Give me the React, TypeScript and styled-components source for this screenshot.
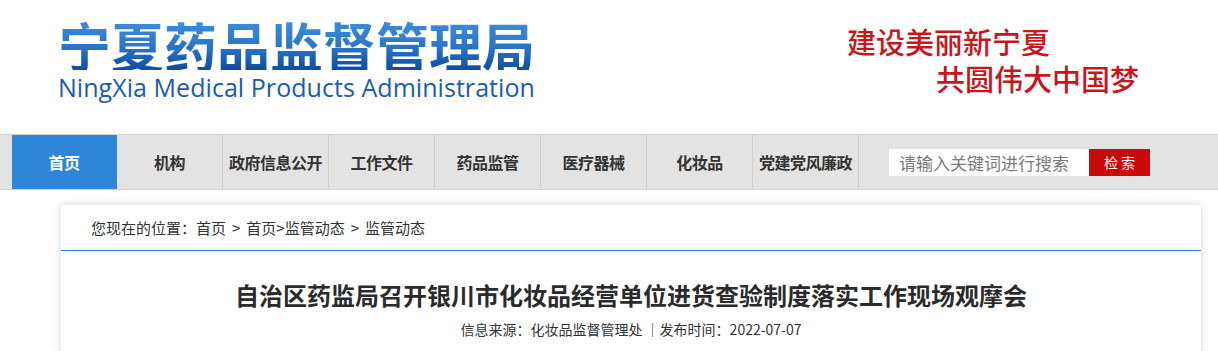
import React from "react";
import styled, { createGlobalStyle } from "styled-components";

const GlobalStyle = createGlobalStyle`
  body {
    margin: 0;
    background: #fff;
    font-family: "Noto Sans CJK SC", "Noto Sans", sans-serif;
    color: #333;
  }
`;

const Page = styled.div`
  width: 1218px;
  height: 351px;
  overflow: hidden;
`;

const Header = styled.header`
  height: 134px;
  display: flex;
  padding-left: 58px;
  box-sizing: border-box;
`;

const Logo = styled.div`
  display: flex;
  flex-direction: column;
  padding-top: 20px;
  width: 480px;
`;

const LogoCn = styled.div`
  font-size: 53px;
  line-height: 50px;
  font-weight: 700;
  background: linear-gradient(180deg, #3d8fdc 0%, #2a74c6 55%, #0f4d9d 100%);
  -webkit-background-clip: text;
  background-clip: text;
  color: transparent;
  white-space: nowrap;
`;

const LogoEn = styled.div`
  margin-top: 3px;
  font-family: "Open Sans", "Noto Sans", sans-serif;
  font-size: 25px;
  line-height: 28px;
  letter-spacing: 0.05px;
  color: #1b5cab;
  white-space: nowrap;
`;

const Slogan = styled.div`
  margin-left: 309px;
  padding-top: 23px;
  display: flex;
  flex-direction: column;
  font-size: 29px;
  line-height: 37px;
  font-weight: 500;
  color: #c8161d;
`;

const SloganLine = styled.div<{ $indent?: number }>`
  padding-left: ${(p) => p.$indent ?? 0}px;
  white-space: nowrap;
`;

const Nav = styled.nav`
  height: 54px;
  background: #e3e3e3;
  border-top: 1px solid #d3d3d3;
  border-bottom: 1px solid #d3d3d3;
  display: flex;
  align-items: stretch;
  padding-left: 12px;
`;

const NavItem = styled.a<{ $active?: boolean }>`
  box-sizing: border-box;
  width: ${(p) => (p.$active ? 105 : 106)}px;
  display: flex;
  align-items: center;
  justify-content: center;
  font-size: 16px;
  font-weight: 700;
  text-decoration: none;
  color: ${(p) => (p.$active ? "#fff" : "#333")};
  background: ${(p) => (p.$active ? "#2d86d8" : "transparent")};
  border-right: 1px solid ${(p) => (p.$active ? "#2d86d8" : "#cfcfcf")};
  white-space: nowrap;
  letter-spacing: -0.5px;
`;

const Search = styled.form`
  display: flex;
  align-items: center;
  margin-left: 30px;
`;

const SearchInput = styled.input`
  width: 200px;
  height: 27px;
  box-sizing: border-box;
  border: none;
  outline: none;
  padding: 0 10px;
  font-family: "Noto Sans CJK SC", sans-serif;
  font-size: 17px;
  background: #fff;
  &::placeholder {
    color: #7a7a7a;
  }
`;

const SearchButton = styled.button`
  width: 61px;
  height: 27px;
  border: none;
  background: #c80a0a;
  color: #fff;
  font-family: "Noto Sans CJK SC", sans-serif;
  font-size: 14px;
  letter-spacing: 3px;
  padding: 0 0 0 3px;
`;

const Content = styled.main`
  padding: 15px 0 0 61px;
`;

const Card = styled.article`
  width: 1140px;
  height: 200px;
  background: #fff;
  box-shadow: 0 0 8px rgba(0, 0, 0, 0.16);
`;

const Crumbs = styled.div`
  height: 46px;
  box-sizing: border-box;
  border-bottom: 1px solid #2a7fd4;
  padding-left: 30px;
  display: flex;
  align-items: center;
  font-size: 15px;
  color: #333;
  white-space: pre;
`;

const Sep = styled.span`
  display: inline-block;
  padding: 0 6px;
`;

const Title = styled.h1`
  margin: 0;
  padding-top: 29px;
  text-align: center;
  font-size: 24px;
  line-height: 30px;
  font-weight: 700;
  color: #2b2b2b;
`;

const Meta = styled.div`
  margin-top: 9px;
  text-align: center;
  font-size: 14px;
  line-height: 20px;
  color: #333;
`;

const navItems = [
  "首页",
  "机构",
  "政府信息公开",
  "工作文件",
  "药品监管",
  "医疗器械",
  "化妆品",
  "党建党风廉政",
];

export default function App() {
  return (
    <Page>
      <GlobalStyle />
      <Header>
        <Logo>
          <LogoCn>宁夏药品监督管理局</LogoCn>
          <LogoEn>NingXia Medical Products Administration</LogoEn>
        </Logo>
        <Slogan>
          <SloganLine>建设美丽新宁夏</SloganLine>
          <SloganLine $indent={89}>共圆伟大中国梦</SloganLine>
        </Slogan>
      </Header>
      <Nav>
        {navItems.map((item, i) => (
          <NavItem key={item} href="#" $active={i === 0}>
            {item}
          </NavItem>
        ))}
        <Search onSubmit={(e) => e.preventDefault()}>
          <SearchInput placeholder="请输入关键词进行搜索" />
          <SearchButton type="submit">检索</SearchButton>
        </Search>
      </Nav>
      <Content>
        <Card>
          <Crumbs>
            您现在的位置：首页<Sep>&gt;</Sep>首页&gt;监管动态<Sep>&gt;</Sep>监管动态
          </Crumbs>
          <Title>
            自治区药监局召开银川市化妆品经营单位进货查验制度落实工作现场观摩会
          </Title>
          <Meta>信息来源：化妆品监督管理处 ｜发布时间：2022-07-07</Meta>
        </Card>
      </Content>
    </Page>
  );
}
